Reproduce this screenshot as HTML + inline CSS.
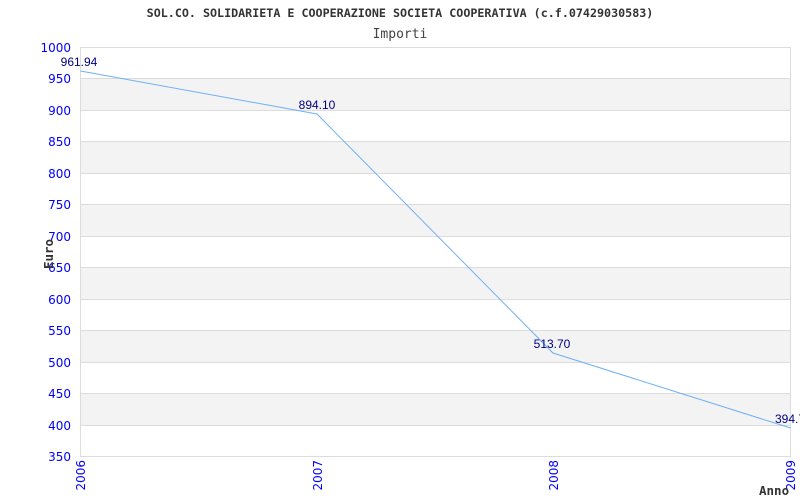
<!DOCTYPE html>
<html><head><meta charset="utf-8"><style>
html,body{margin:0;padding:0;background:#fff;width:800px;height:500px;overflow:hidden}
svg{display:block}
</style></head><body>
<svg width="800" height="500" xmlns="http://www.w3.org/2000/svg">
<text x="400" y="17" text-anchor="middle" font-family="DejaVu Sans Mono, Liberation Mono, monospace" font-size="11.7" font-weight="bold" fill="#333">SOL.CO. SOLIDARIETA E COOPERAZIONE SOCIETA COOPERATIVA (c.f.07429030583)</text>
<text x="400" y="38" text-anchor="middle" font-family="DejaVu Sans Mono, Liberation Mono, monospace" font-size="13" fill="#444">Importi</text>
<g fill="#f3f3f3">
<rect x="80.5" y="78.5" width="710" height="31.5"/>
<rect x="80.5" y="141.5" width="710" height="31.5"/>
<rect x="80.5" y="204.5" width="710" height="31.5"/>
<rect x="80.5" y="267.5" width="710" height="31.5"/>
<rect x="80.5" y="330.5" width="710" height="31.5"/>
<rect x="80.5" y="393.5" width="710" height="31.5"/>
</g>
<g stroke="#dcdcdc" stroke-width="1">
<line x1="80" y1="47.5" x2="791" y2="47.5"/>
<line x1="80" y1="78.5" x2="791" y2="78.5"/>
<line x1="80" y1="110.5" x2="791" y2="110.5"/>
<line x1="80" y1="141.5" x2="791" y2="141.5"/>
<line x1="80" y1="173.5" x2="791" y2="173.5"/>
<line x1="80" y1="204.5" x2="791" y2="204.5"/>
<line x1="80" y1="236.5" x2="791" y2="236.5"/>
<line x1="80" y1="267.5" x2="791" y2="267.5"/>
<line x1="80" y1="299.5" x2="791" y2="299.5"/>
<line x1="80" y1="330.5" x2="791" y2="330.5"/>
<line x1="80" y1="362.5" x2="791" y2="362.5"/>
<line x1="80" y1="393.5" x2="791" y2="393.5"/>
<line x1="80" y1="425.5" x2="791" y2="425.5"/>
<line x1="80" y1="456.5" x2="791" y2="456.5"/>
<line x1="80.5" y1="47" x2="80.5" y2="457"/>
<line x1="790.5" y1="47" x2="790.5" y2="457"/>
</g>
<g font-family="DejaVu Sans, Liberation Sans, sans-serif" font-size="12" fill="#0000ff" text-anchor="end">
<text x="71" y="52">1000</text><text x="71" y="83">950</text><text x="71" y="115">900</text>
<text x="71" y="146">850</text><text x="71" y="178">800</text><text x="71" y="209">750</text>
<text x="71" y="241">700</text><text x="71" y="272">650</text><text x="71" y="304">600</text>
<text x="71" y="335">550</text><text x="71" y="367">500</text><text x="71" y="398">450</text>
<text x="71" y="430">400</text><text x="71" y="461">350</text>
</g>
<g font-family="DejaVu Sans, Liberation Sans, sans-serif" font-size="12" fill="#0000ff" text-anchor="end">
<text transform="translate(85,460) rotate(-90)">2006</text>
<text transform="translate(322,460) rotate(-90)">2007</text>
<text transform="translate(558,460) rotate(-90)">2008</text>
<text transform="translate(795,460) rotate(-90)">2009</text>
</g>
<text transform="translate(53,254) rotate(-90)" text-anchor="middle" font-family="DejaVu Sans Mono, Liberation Mono, monospace" font-size="12.5" font-weight="bold" fill="#333">Euro</text>
<text x="759" y="495" font-family="DejaVu Sans Mono, Liberation Mono, monospace" font-size="12.5" font-weight="bold" fill="#333">Anno</text>
<polyline points="80.5,71 317,114 553,353 790.5,428" fill="none" stroke="#6fb0f5" stroke-width="1"/>
<g font-family="Liberation Sans, Arial, sans-serif" font-size="12" fill="#000080" text-anchor="middle">
<text x="79" y="66">961.94</text>
<text x="317" y="109">894.10</text>
<text x="552" y="348">513.70</text>
<text x="790" y="423">394.7</text>
</g>
</svg>
</body></html>
